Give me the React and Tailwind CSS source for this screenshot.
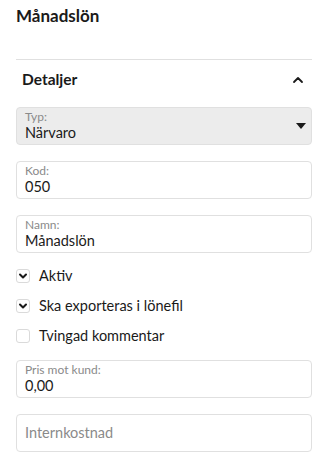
import React from 'react';

const font = { fontFamily: 'Lato, "Noto Sans", sans-serif' };

const Field = ({ label, value, placeholder, gray }) => (
  <div
    className={`h-[38px] rounded-[4px] border border-[#e0e0e0] px-2 flex flex-col justify-center ${gray ? 'bg-[#ececec]' : 'bg-white'}`}
  >
    {label && <div className="text-[12px] leading-[14px] text-[#8a8a8a]">{label}</div>}
    {value && <div className="text-[14.5px] leading-[18px] text-[#1a1a1a]">{value}</div>}
    {placeholder && <div className="text-[14.5px] leading-[18px] text-[#8a8a8a]">{placeholder}</div>}
  </div>
);

const Check = ({ checked, label }) => (
  <div className="flex items-center gap-[9px] h-[30px]">
    <div className="w-[14px] h-[14px] rounded-[3px] border border-[#dadada] bg-white flex items-center justify-center">
      {checked && (
        <svg width="10" height="10" viewBox="0 0 10 10" fill="none">
          <path d="M2 3.5 L5 6.5 L8 3.5" stroke="#1a1a1a" strokeWidth="2" strokeLinecap="round" strokeLinejoin="round" />
        </svg>
      )}
    </div>
    <span className="text-[14.5px] text-[#1a1a1a]">{label}</span>
  </div>
);

export default function App() {
  return (
    <div className="w-[328px] h-[476px] bg-white px-4 pt-[5px]" style={font}>
      <h1 className="text-[17px] font-bold text-[#1a1a1a] leading-[22px]">Månadslön</h1>

      <div className="mt-[32px] border-t border-[#e0e0e0]" />

      <div className="flex items-center justify-between h-[38px] mt-[1px] px-[6px]">
        <span className="text-[15.5px] font-bold text-[#1a1a1a]">Detaljer</span>
        <svg width="12" height="8" viewBox="0 0 12 8" fill="none" className="mr-[2px]">
          <path d="M2 6 L6 2 L10 6" stroke="#1a1a1a" strokeWidth="1.8" strokeLinecap="round" strokeLinejoin="round" />
        </svg>
      </div>

      <div className="mt-[8px] flex flex-col gap-[16px]">
        <div className="relative">
          <Field label="Typ:" value="Närvaro" gray />
          <svg width="10" height="6" viewBox="0 0 10 6" className="absolute right-[6px] top-[16px]">
            <path d="M0 0 L10 0 L5 6 Z" fill="#1a1a1a" />
          </svg>
        </div>
        <Field label="Kod:" value="050" />
        <Field label="Namn:" value="Månadslön" />
      </div>

      <div className="mt-[8px] flex flex-col">
        <Check checked label="Aktiv" />
        <Check checked label="Ska exporteras i lönefil" />
        <Check label="Tvingad kommentar" />
      </div>

      <div className="mt-[9px] flex flex-col gap-[16px]">
        <Field label="Pris mot kund:" value="0,00" />
        <Field placeholder="Internkostnad" />
      </div>
    </div>
  );
}
